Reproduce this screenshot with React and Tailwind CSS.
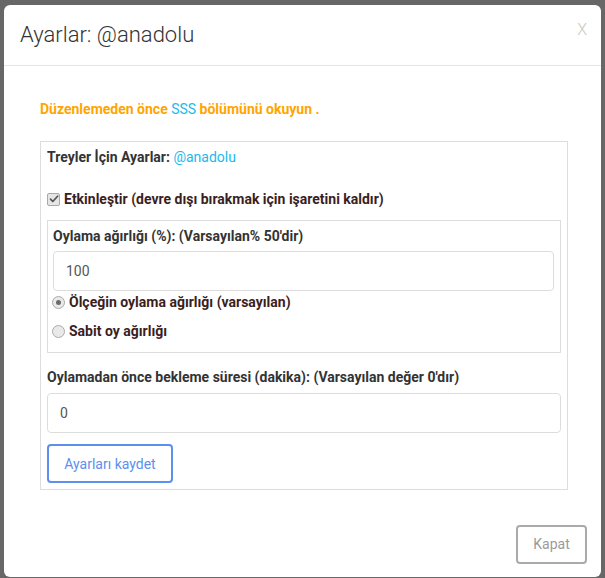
function CheckBox() {
  return (
    <span className="w-[13px] h-[13px] rounded-[2px] border border-[#a9a9a9] bg-[#e6e6e6] flex items-center justify-center shrink-0">
      <svg className="w-[10px] h-[10px]" viewBox="0 0 10 10" fill="none">
        <path d="M1.5 5.2l2.3 2.3L8.6 2.2" stroke="#555" strokeWidth="1.7" strokeLinecap="round" strokeLinejoin="round" />
      </svg>
    </span>
  )
}

function Radio({ checked }) {
  return (
    <span className="w-[13px] h-[13px] rounded-full border border-[#a9a9a9] bg-[#e9e9e9] flex items-center justify-center shrink-0">
      {checked && <span className="w-[5px] h-[5px] rounded-full bg-[#6a6a6a]" />}
    </span>
  )
}

export default function App() {
  return (
    <div className="h-[578px] bg-[#676767] pt-[5px] pl-[4px] overflow-hidden font-['Roboto',sans-serif]">
      <div className="w-[597px] h-[572px] bg-white rounded-[6px] flex flex-col">
        {/* Header */}
        <div className="h-[61px] border-b border-[#e5e5e5] flex items-center justify-between pl-[16px] pr-[14px]">
          <h4 className="text-[22px] font-light text-[#333] leading-none">Ayarlar: @anadolu</h4>
          <span className="text-[16px] font-light text-[#c8c8c8] -mt-[10px]">X</span>
        </div>

        {/* Body */}
        <div className="flex-1 pl-[36px] pt-[33px]">
          <p className="text-[14px] font-bold text-[#ffa500] leading-[20px]">
            Düzenlemeden önce <span className="font-normal text-[#21b9ec]">SSS</span> bölümünü okuyun .
          </p>

          <div className="mt-[22px] w-[528px] border border-[#ddd] px-[6px] pt-[5px] pb-[6px] text-[14px] leading-[20px]">
            <p className="font-bold text-[#333]">
              Treyler İçin Ayarlar: <span className="font-normal text-[#21b9ec]">@anadolu</span>
            </p>

            <label className="mt-[22px] flex items-center gap-[4px] font-bold text-[#3b1e1e]">
              <CheckBox />
              Etkinleştir (devre dışı bırakmak için işaretini kaldır)
            </label>

            <div className="mt-[11px] border border-[#ddd] pl-[5px] pr-[6px] pt-[5px] pb-[11px]">
              <p className="font-bold text-[#333]">Oylama ağırlığı (%): (Varsayılan% 50'dir)</p>
              <div className="mt-[5px] h-[40px] border border-[#ddd] rounded-[4px] flex items-center px-[12px] text-[#555] font-normal">
                100
              </div>
              <label className="-ml-[1px] mt-[1px] flex items-center gap-[4px] font-bold text-[#3b1e1e] leading-[20px]">
                <Radio checked />
                Ölçeğin oylama ağırlığı (varsayılan)
              </label>
              <label className="-ml-[1px] mt-[9px] flex items-center gap-[4px] font-bold text-[#3b1e1e] leading-[20px]">
                <Radio />
                Sabit oy ağırlığı
              </label>
            </div>

            <p className="mt-[14px] font-bold text-[#333]">
              Oylamadan önce bekleme süresi (dakika): (Varsayılan değer 0'dır)
            </p>
            <div className="mt-[6px] h-[40px] border border-[#ddd] rounded-[4px] flex items-center px-[12px] text-[#555]">
              0
            </div>
            <button className="mt-[11px] w-[126px] h-[39px] border-2 border-[#5c8ff0] rounded-[4px] text-[#5c8ff0] text-[14px]">
              Ayarları kaydet
            </button>
          </div>
        </div>

        {/* Footer */}
        <div className="flex justify-end pr-[14px] pb-[13px]">
          <button className="w-[71px] h-[39px] border-2 border-[#aaa] rounded-[4px] text-[#9a9a9a] text-[14px]">
            Kapat
          </button>
        </div>
      </div>
    </div>
  )
}
